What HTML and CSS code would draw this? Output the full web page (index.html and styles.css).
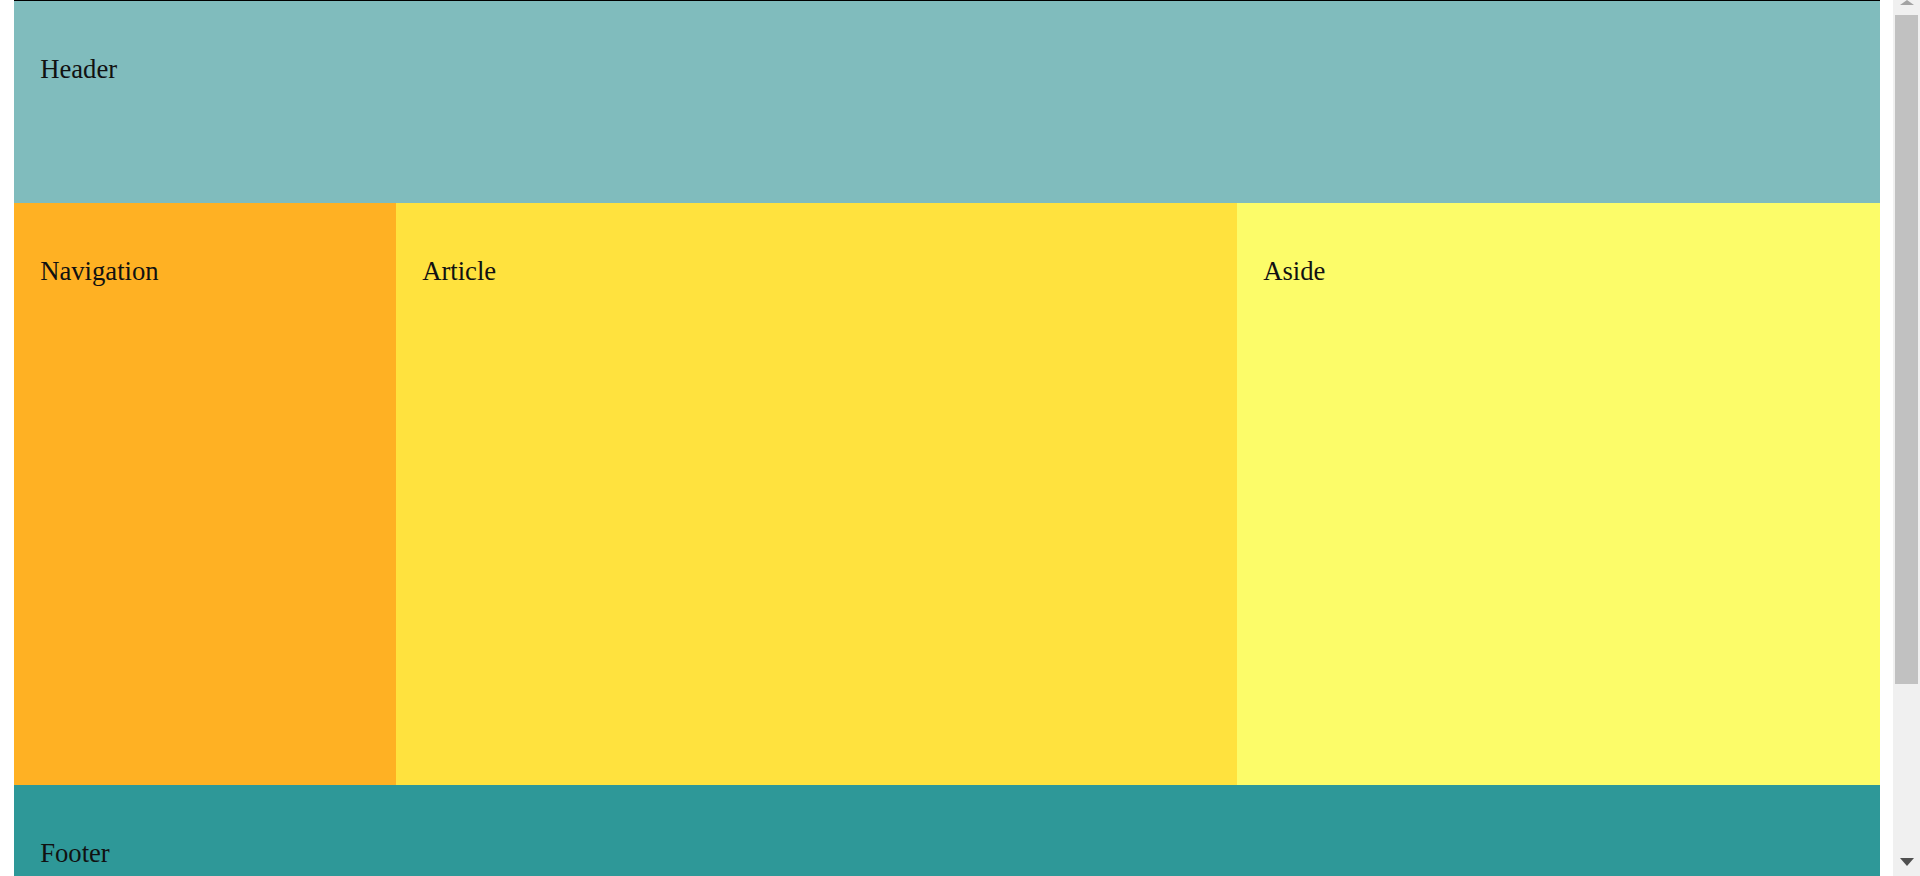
FILE: index.html
```html
<!DOCTYPE html>
<html lang="en">
<head>
<meta charset="utf-8">
<title>Layout</title>
<link rel="stylesheet" href="styles.css">
</head>
<body>
<div class="viewport">
  <div class="page">
    <header class="header"><p>Header</p></header>
    <div class="main">
      <nav class="nav"><p>Navigation</p></nav>
      <article class="article"><p>Article</p></article>
      <aside class="aside"><p>Aside</p></aside>
    </div>
    <footer class="footer"><p>Footer</p></footer>
  </div>
</div>
<div class="scrollbar">
  <div class="sb-button sb-up"><span class="arrow-up"></span></div>
  <div class="sb-track"><div class="sb-thumb"></div></div>
  <div class="sb-button sb-down"><span class="arrow-down"></span></div>
</div>
</body>
</html>
```

FILE: styles.css
```css
html,
body {
  height: 100%;
}
body {
  margin: 0;
  display: flex;
  overflow: hidden;
  background: #ffffff;
  font-family: "Liberation Serif", "Times New Roman", serif;
  font-size: 26.67px;
  color: #111111;
}
.viewport {
  flex: 1;
  min-width: 0;
  padding: 0 13.5px 13px;
  overflow: hidden;
}
.page {
  border-top: 1px solid #000000;
  display: flex;
  flex-direction: column;
}
.header,
.nav,
.article,
.aside,
.footer {
  padding: 26.67px;
  box-sizing: border-box;
}
.page p {
  margin: 26.67px 0 0;
}
.header {
  background: #80bcbd;
  height: 202px;
}
.main {
  display: grid;
  grid-template-columns: 382fr 841fr 643fr;
  height: 582px;
}
.nav {
  background: #ffb123;
}
.article {
  background: #ffe23e;
}
.aside {
  background: #fcfc69;
}
.footer {
  background: #2e9898;
  height: 306px;
}

/* scrollbar */
.scrollbar {
  width: 27px;
  flex: none;
  background: #f0f0f0;
  display: flex;
  flex-direction: column;
}
.sb-button {
  height: 15px;
  flex: none;
  display: flex;
  justify-content: center;
}
.sb-up {
  align-items: flex-start;
}
.sb-down {
  height: 18px;
  align-items: flex-start;
}
.arrow-up {
  width: 0;
  height: 0;
  margin-left: 1px;
  border-left: 7px solid transparent;
  border-right: 7px solid transparent;
  border-bottom: 5px solid #a3a3a3;
}
.arrow-down {
  width: 0;
  height: 0;
  margin-left: 1px;
  border-left: 7px solid transparent;
  border-right: 7px solid transparent;
  border-top: 8px solid #505050;
}
.sb-track {
  flex: 1;
  padding: 0 2px 0 2px;
}
.sb-thumb {
  height: 669px;
  background: #c1c1c1;
}
```
